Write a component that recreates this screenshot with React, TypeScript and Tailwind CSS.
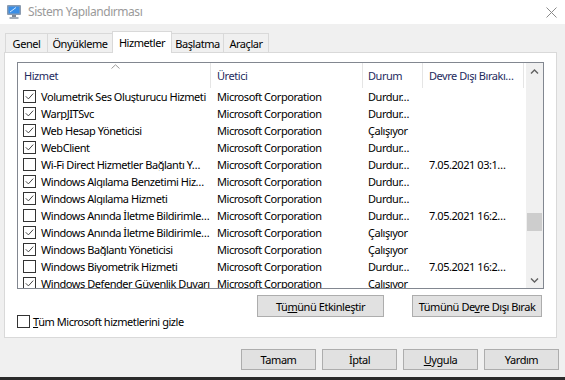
const rows: [boolean, string, string, string][] = [
  [true, "Volumetrik Ses Oluşturucu Hizmeti", "Durdur…", ""],
  [true, "WarpJITSvc", "Durdur…", ""],
  [true, "Web Hesap Yöneticisi", "Çalışıyor", ""],
  [true, "WebClient", "Durdur…", ""],
  [false, "Wi-Fi Direct Hizmetler Bağlantı Y…", "Durdur…", "7.05.2021 03:1…"],
  [true, "Windows Algılama Benzetimi Hiz…", "Durdur…", ""],
  [true, "Windows Algılama Hizmeti", "Durdur…", ""],
  [false, "Windows Anında İletme Bildirimle…", "Durdur…", "7.05.2021 16:2…"],
  [true, "Windows Anında İletme Bildirimle…", "Çalışıyor", ""],
  [true, "Windows Bağlantı Yöneticisi", "Çalışıyor", ""],
  [false, "Windows Biyometrik Hizmeti", "Durdur…", "7.05.2021 16:2…"],
  [true, "Windows Defender Güvenlik Duvarı", "Çalışıyor", ""],
];

const tabs = [
  { label: "Genel", w: "w-[43px]" },
  { label: "Önyükleme", w: "w-[66px]" },
  { label: "Hizmetler", w: "w-[60px]", active: true },
  { label: "Başlatma", w: "w-[53px]" },
  { label: "Araçlar", w: "w-[46px]" },
];

function Check({ on }: { on: boolean }) {
  return (
    <span className="w-[13px] h-[13px] border border-[#333] bg-white flex items-center justify-center shrink-0">
      {on && (
        <svg width="9" height="9" viewBox="0 0 9 9">
          <path d="M0.8 4.3 L3.4 6.9 L8.2 1.6" fill="none" stroke="#444" strokeWidth="1" />
        </svg>
      )}
    </span>
  );
}

function Chevron({ down }: { down?: boolean }) {
  return (
    <svg width="9" height="6" viewBox="0 0 9 6">
      <path
        d={down ? "M1 1.5 L4.5 5 L8 1.5" : "M1 4.5 L4.5 1 L8 4.5"}
        fill="none"
        stroke="#606060"
        strokeWidth="1.4"
      />
    </svg>
  );
}

function Btn({ children, w }: { children: React.ReactNode; w: string }) {
  return (
    <div className={`${w} bg-[#e1e1e1] border border-[#adadad] flex items-center justify-center text-black whitespace-nowrap`}>
      {children}
    </div>
  );
}

export default function App() {
  return (
    <div className="w-[565px] h-[380px] bg-[#f0f0f0] flex flex-col overflow-hidden font-['Noto_Sans',sans-serif] text-[11px] tracking-[-0.45px] text-black leading-none">
      {/* title bar */}
      <div className="h-[24px] bg-white flex items-center shrink-0">
        <svg className="ml-[6px]" width="16" height="16" viewBox="0 0 16 16">
          <rect x="1" y="1" width="14" height="10" rx="1" fill="#8a9bb0" />
          <rect x="2.5" y="2.5" width="11" height="7" fill="#3a8ee6" />
          <path d="M4 8 L10 3.5" stroke="#cfe6ff" strokeWidth="1" />
          <rect x="6" y="11" width="4" height="2" fill="#7d8796" />
          <rect x="3.5" y="13" width="9" height="2" fill="#a4adb8" />
        </svg>
        <span className="ml-[6px] text-[12px] text-[#9a9a9a]">Sistem Yapılandırması</span>
        <svg className="ml-auto mr-[8px]" width="11" height="11" viewBox="0 0 11 11">
          <path d="M0.5 0.5 L10.5 10.5 M10.5 0.5 L0.5 10.5" stroke="#8a8a8a" strokeWidth="1" />
        </svg>
      </div>

      {/* tabs */}
      <div className="flex items-end h-[22px] mt-[7px] pl-[5px] mb-[-1px] relative z-10 shrink-0">
        {tabs.map((t, i) => (
          <div
            key={t.label}
            className={`${t.w} ${i > 0 ? "-ml-px" : ""} border border-b-0 border-[#d9d9d9] flex items-center justify-center ${
              t.active ? "h-[22px] bg-white relative z-10" : "h-[19px] mb-[1px] bg-[#f0f0f0]"
            }`}
          >
            {t.label}
          </div>
        ))}
      </div>

      {/* panel */}
      <div className="ml-[4px] w-[553px] h-[286px] border border-[#d9d9d9] bg-white shrink-0 flex flex-col">
        <div className="ml-[12px] mt-[9px] w-[527px] h-[227px] border border-[#828790] flex">
          <div className="w-[508px] flex flex-col overflow-hidden">
            <div className="h-[25px] flex shrink-0 text-[#1e2b5e] relative">
              <div className="w-[193px] pl-[6px] border-r border-[#e5e5e5] flex items-center">Hizmet</div>
              <div className="w-[152px] pl-[6px] border-r border-[#e5e5e5] flex items-center">Üretici</div>
              <div className="w-[60px] pl-[5px] border-r border-[#e5e5e5] flex items-center">Durum</div>
              <div className="w-[101px] pl-[6px] border-r border-[#e5e5e5] flex items-center whitespace-nowrap">Devre Dışı Bırakı…</div>
              <svg className="absolute left-[93px] top-[1px]" width="9" height="5" viewBox="0 0 9 5">
                <path d="M0.5 4.5 L4.5 0.8 L8.5 4.5" fill="none" stroke="#9a9a9a" strokeWidth="1" />
              </svg>
            </div>
            {rows.map(([on, name, status, date], i) => (
              <div key={i} className="h-[17px] flex items-center shrink-0 whitespace-nowrap">
                <div className="w-[193px] pl-[5px] flex items-center gap-[5px] overflow-hidden">
                  <Check on={on} />
                  <span>{name}</span>
                </div>
                <div className="w-[152px] pl-[6px]">Microsoft Corporation</div>
                <div className="w-[60px] pl-[5px]">{status}</div>
                <div className="w-[101px] pl-[6px]">{date}</div>
              </div>
            ))}
          </div>
          <div className="w-[17px] bg-[#f0f0f0] flex flex-col items-center">
            <div className="h-[17px] flex items-center justify-center">
              <Chevron />
            </div>
            <div className="w-[15px] h-[18px] bg-[#cdcdcd] mt-[133px]" />
            <div className="mt-auto h-[17px] flex items-center justify-center">
              <Chevron down />
            </div>
          </div>
        </div>

        <div className="flex justify-end gap-[28px] pr-[14px] mt-[6px]">
          <Btn w="w-[127px] h-[22px]">
            <span>
              Tü<u>m</u>ünü Etkinleştir
            </span>
          </Btn>
          <Btn w="w-[130px] h-[22px]">
            <span>
              Tümünü De<u>v</u>re Dışı Bırak
            </span>
          </Btn>
        </div>

        <div className="flex items-center gap-[3px] pl-[12px] mt-[-2px]">
          <span className="w-[13px] h-[13px] border border-[#333] bg-white" />
          <span>
            <u>T</u>üm Microsoft hizmetlerini gizle
          </span>
        </div>
      </div>

      {/* dialog buttons */}
      <div className="flex justify-end gap-[6px] pr-[6px] mt-[11px] shrink-0">
        <Btn w="w-[75px] h-[21px]">Tamam</Btn>
        <Btn w="w-[75px] h-[21px]">İptal</Btn>
        <Btn w="w-[75px] h-[21px]">
          <span>
            <u>U</u>ygula
          </span>
        </Btn>
        <Btn w="w-[75px] h-[21px]">Yardım</Btn>
      </div>

      <div className="flex-1" />
      <div className="h-[3px] bg-[#2b2b2b] shrink-0" />
    </div>
  );
}
